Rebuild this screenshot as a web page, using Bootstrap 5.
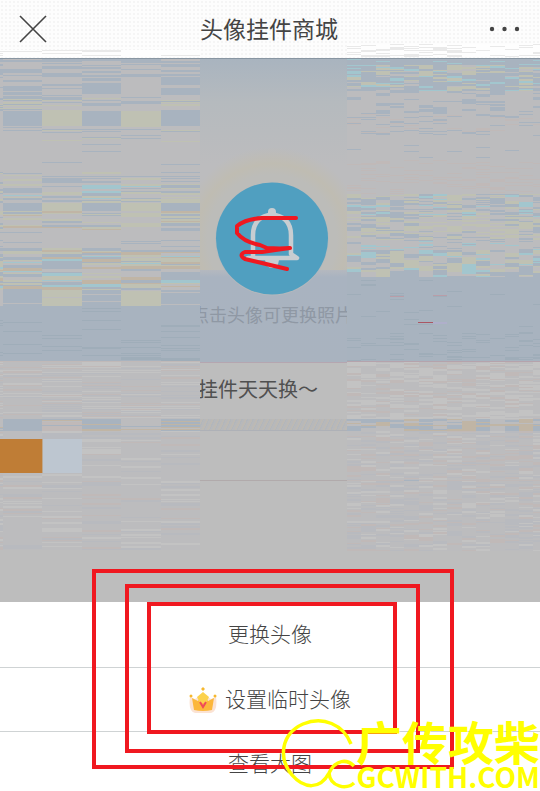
<!DOCTYPE html>
<html lang="zh-CN">
<head>
<meta charset="utf-8">
<meta name="viewport" content="width=device-width, initial-scale=1">
<title>头像挂件商城</title>
<link href="https://cdn.jsdelivr.net/npm/bootstrap@5.3.0/dist/css/bootstrap.min.css" rel="stylesheet">
<style>
body{font-family:"Noto Sans CJK SC",sans-serif;color:#444;background:#fff}
.screen{overflow:hidden}
.topbar{height:58px;padding-bottom:2px;background:#fdfdfd radial-gradient(circle,#f5f5f5 1px,transparent 1px) 0 0/4px 4px}
.topbar h1{font-size:23px;line-height:32px;color:#444}
.icon-btn{line-height:0;color:#444}
.hero{height:304px;border-top:1px solid #8996a2;padding-top:123px;
background:radial-gradient(circle 92px at 272px 180px,#bcbcb9 70%,#bfbcb2 82%,rgba(190,188,180,0) 100%) 0 0/100% 211px no-repeat,
linear-gradient(#a9b4bf,#b5babe 14%,#bcbcbe 35%,#bcbcbe 68%,#a9b3c0 72%,#a9b3bf)}
.avatar-btn{width:114px;height:114px;line-height:0}
.hint{font-size:18px;line-height:28px;color:#8f98a4}
.shade{background:#bdbdbd}
.promo{height:57px;border-top:1px solid #b5a6b0;font-size:20px;line-height:30px;padding:0 0 4px 198px;color:#505050}
.band{height:12px;background:repeating-linear-gradient(115deg,#b7b8ba 0 2px,#bcb9b4 2px 4px,#b2b6bb 4px 5px);border-bottom:1px solid #aeb1b7}
.goods{height:50px;border-bottom:1px solid #b1aaab}
.rest{height:121px}
.sheet-btn{font-size:21px;line-height:32px;color:#444;font-weight:300;height:65px;border:0;background:#fff}
.sheet-btn + .sheet-btn{border-top:1px solid #cfd3d4;height:64px}
.sheet-btn.last-btn{height:60px}
.sheet-text{padding-bottom:4px}
.overlay{pointer-events:none}
.watermark{right:0;bottom:0;color:#ff0;font-weight:700}
.wm-name{font-size:46px;line-height:46px}
.wm-site{font-size:28px;line-height:26px;padding-bottom:2px}
</style>
<script src="https://cdn.jsdelivr.net/npm/bootstrap@5.3.0/dist/js/bootstrap.bundle.min.js" defer></script>
</head>
<body>
<div class="screen position-relative d-flex flex-column min-vh-100">
<header class="topbar d-flex align-items-center justify-content-between px-3">
<button class="btn icon-btn p-0 border-0" type="button" aria-label="关闭"><svg width="36" height="34" fill="none" stroke="currentColor" stroke-width="1.600"><path d="M4 5 30 31M30 5 4 31"/></svg></button>
<h1 class="m-0 fw-normal">头像挂件商城</h1>
<button class="btn icon-btn p-0 border-0" type="button" aria-label="更多"><svg width="38" height="20" fill="currentColor"><circle cx="6" cy="11" r="2.200"/><circle cx="18.500" cy="11" r="2.200"/><circle cx="31" cy="11" r="2.200"/></svg></button>
</header>
<main class="shade flex-grow-1">
<section class="hero d-flex flex-column align-items-center ps-1">
<button class="btn avatar-btn p-0 border-0" type="button" aria-label="更换头像照片">
<svg width="114" height="114" viewBox="215 182 114 114"><circle cx="272" cy="239" r="56.500" fill="#b3b8bc"/><circle cx="272" cy="238.500" r="56" fill="#509fc0"/>
<g fill="none" stroke="#c8cdd1" stroke-linecap="round"><path d="M253 257V235C253 222 261 215 272 215S291 222 291 235V254L297 258H248" stroke-width="4.500" stroke-linejoin="round"/><path d="M272 212v2" stroke-width="8"/></g><path d="M265 260h14q-1 8-7 8t-7-8" fill="#c8cdd1"/>
<path d="M296 218H262Q246 219 237 226V233Q244 242 260 245L267 248Q280 249 290 248Q275 250 262 252L245 252Q238 255 245 259L287 269" fill="none" stroke="#f01820" stroke-width="4" stroke-linecap="round" stroke-linejoin="round"/></svg>
</button>
<p class="hint m-0 mt-1">点击头像可更换照片</p>
</section>
<section class="promo d-flex align-items-center"><p class="m-0">挂件天天换～</p></section>
<div class="band"></div><div class="goods"></div><div class="rest"></div>
</main>
<svg class="overlay position-absolute top-0 start-0" width="540" height="602" id="mosaic" shape-rendering="crispEdges" aria-hidden="true"></svg>
<nav class="d-flex flex-column" aria-label="头像操作">
<button class="btn sheet-btn rounded-0 p-0" type="button"><span class="sheet-text d-block">更换头像</span></button>
<button class="btn sheet-btn rounded-0 p-0 d-flex justify-content-center align-items-center" type="button">
<svg class="me-2" width="28" height="26" viewBox="190 686 28 26"><path d="M191 696q-2 14 5 16h16q7-2 5-16l-5 2-8-5-8 5z" fill="#fbe3d4"/><path d="m193 697 6 3 5-7 5 7 6-3-2 12q-9 2-18 0z" fill="#fcb73b"/><path d="m198 696 6-5 6 5-3 6h-6z" fill="#fcd24d"/><g fill="#f6b82e"><circle cx="192" cy="695" r="1.500"/><circle cx="216" cy="695" r="1.500"/><path d="m204 686 2 2-2 2-2-2z"/></g><path d="m201 701 3 5 3-5" fill="none" stroke="#f04b58" stroke-width="2"/></svg>
<span class="sheet-text">设置临时头像</span></button>
<button class="btn sheet-btn last-btn rounded-0 p-0" type="button"><span class="d-block">查看大图</span></button>
</nav>
<svg class="overlay position-absolute top-0 start-0" width="540" height="791" fill="none" aria-hidden="true">
<g stroke="#f01820" stroke-width="4"><path d="M94 571H452V767H94z"/><path d="M127 586H418V751H127z"/><path d="M149 604H395V732H149z"/></g>
<g stroke="#ff0" stroke-width="3.500"><path d="M351 744C343 724 323 716 303 724C281 734 278 758 292 775C304 789 320 790 329 773C336 759 347 759 354 766"/><path d="M329 773C330 787 347 790 354 783"/></g></svg>
<div class="watermark overlay position-absolute text-end"><div class="wm-name">广传攻柴</div><div class="wm-site">GCWITH.COM</div></div>
</div>
<script>
const G='#bcbcbe',B='#a8b3bf',Y='#bfc1b3',C='#a2c6ce',O='#c0b5a5',D='#9fadb9',P='#c0b9b8',L='#c3c3c3',V='#b8babf',W='#fefefe',K='#e9e9e9';
let seed=17;
const rnd=()=>(seed=(seed*1103515245+12345)%2147483648)/2147483648;
let out='';
const rect=(x,y,w,h,c)=>out+=`<rect x="${x}" y="${y}" width="${w}" height="${h}" fill="${c}"/>`;
// Each band: top, bottom, base colour, stripe colours, stripe density, thickest stripe
function panel(edges,bands){
  bands.forEach(([t,b,base,colors,density,thick])=>{
    for(let i=0;i<edges.length-1;i++){
      const x=edges[i],w=edges[i+1]-x;
      rect(x,t,w,b-t,Array.isArray(base)?base[i%base.length]:base);
      for(let y=t;y<b;){
        const h=Math.min(b-y,1+Math.floor(rnd()*thick));
        if(rnd()<density)rect(x,y,w,h,colors[Math.floor(rnd()*colors.length)]);
        y+=h;
      }
    }
  });
}
panel([0,3,42,82,121,161,200],[
 [50,57,W,[K],.3,1],[59,78,B,[G],.45,2],[78,94,[G,B,G,B,G,B],[G,B],.25,2],[94,111,G,[B,B,Y],.4,1],
 [111,126,[G,B,Y,B,Y,B],[Y],0,2],[126,142,G,[B,Y],.22,1],[142,172,G,[B],.02,1],[172,178,G,[Y,B],.25,1],
 [178,203,G,[B,B,B,Y,Y,C,G],.7,2],[203,211,[G,B,Y,B,Y,B],[B],.02,1],[211,230,G,[B,Y,Y,O],.6,2],[230,248,G,[B],.08,1],
 [248,290,G,[B,B,B,Y,Y,Y,O,C],.8,3],[290,306,[G,B,Y,B,Y,B],[G],.1,1],[306,333,B,[D],.04,1],[333,361,B,[D],.15,1],[361,362,P,[P],0,1],
 [362,419,G,[L,P,L,V],.4,1],[419,431,[G,B,P,B,G,B],[O,G,B],.4,1],[431,550,G,[L,P,L,V,V],.4,2]]);
const cols=[];
for(let i=0;i<14;i++)cols.push(Math.round(347+i*14.333));
cols.push(540);
panel(cols,[
 [44,57,W,[K],.3,1],[59,65,B,[C],.1,1],[65,91,B,[C,Y,Y,G],.4,2],[91,114,G,[B,G],.45,3],[114,135,G,[B,B,P],.25,1],[135,160,G,[B],.04,1],
 [160,194,G,[P],.16,1],[194,217,G,[B,Y,B,C],.65,2],[217,240,G,[B,Y,Y],.6,2],[240,250,G,[B,C],.15,1],[250,277,G,[B,Y,Y,B,Y,C,B],.75,4],
 [277,333,B,[D],.03,1],[333,361,B,[D],.18,1],[361,362,'#b5a3ac',[B],0,1],[362,419,G,[L,P,L],.5,2],[419,431,[O,B,G,B],[O,G,B],.5,2],
 [431,480,G,[L,P,V],.5,2],[480,481,P,[B],.2,1],[481,551,G,[L,P,V,V],.5,2]]);
rect(0,439,42,34,'#bf7d36');rect(42,439,1,34,'#bda88f');rect(43,439,39,34,'#bdc6d0');
rect(418,322,15,1,'#aa5663');rect(433,322,14,2,'#afafca');rect(390,296,14,1,'#b99da8');rect(433,295,14,1,'#b99da8');
document.getElementById('mosaic').innerHTML=out;
</script>
</body>
</html>
